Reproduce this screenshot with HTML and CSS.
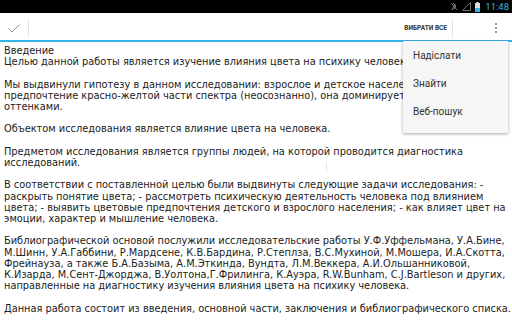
FILE: index.html
```html
<!DOCTYPE html>
<html lang="ru">
<head>
<meta charset="utf-8">
<title>Введение</title>
<link rel="stylesheet" href="styles.css">
</head>
<body>
<div class="status">
  <svg class="st-icon" width="8" height="9" viewBox="0 0 8 9"><path d="M2 8 L5 2 M3 1 L6 4 L4 7" stroke="#8a8a8a" stroke-width="1" fill="none"/><path d="M1 1 L7 8" stroke="#8a8a8a" stroke-width="0.8"/></svg>
  <svg class="st-icon" width="9" height="9" viewBox="0 0 9 9"><path d="M0.5 8.5 L8.5 0.5 L8.5 8.5 Z" stroke="#8a8a8a" stroke-width="0.8" fill="none"/></svg>
  <svg class="st-icon" width="5" height="10" viewBox="0 0 5 10"><rect x="1.5" y="0" width="2" height="1" fill="#fff"/><rect x="0" y="1" width="5" height="9" fill="#ddd"/><rect x="0" y="6" width="5" height="4" fill="#33b5e5"/></svg>
  <span class="time">11:48</span>
</div>
<div class="actionbar">
  <div class="done">
    <svg width="12" height="9" viewBox="0 0 12 9"><path d="M0.5 4.5 L4 8 L11.5 0.5" stroke="#8c8c8c" stroke-width="1" fill="none"/></svg>
  </div>
  <div class="divider"></div>
  <div class="spacer"></div>
  <div class="selectall">ВИБРАТИ ВСЕ</div>
  <div class="divider"></div>
  <div class="overflow"><span></span><span></span><span></span></div>
</div>
<div class="content">
  <p>Введение<br>Целью данной работы является изучение влияния цвета на психику человека.</p>
  <p>Мы выдвинули гипотезу в данном исследовании: взрослое и детское население отдает<br>предпочтение красно-желтой части спектра (неосознанно), она доминирует над холодными<br>оттенками.</p>
  <p>Объектом исследования является влияние цвета на человека.</p>
  <p>Предметом исследования является группы людей, на которой проводится диагностика<br>исследований.</p>
  <p>В соответствии с поставленной целью были выдвинуты следующие задачи исследования: -<br>раскрыть понятие цвета; - рассмотреть психическую деятельность человека под влиянием<br>цвета; - выявить цветовые предпочтения детского и взрослого населения; - как влияет цвет на<br>эмоции, характер и мышление человека.</p>
  <p>Библиографической основой послужили исследовательские работы У.Ф.Уффельмана, У.А.Бине,<br>М.Шинн, У.А.Габбини, Р.Мардсене, К.В.Бардина, Р.Степлза, В.С.Мухиной, М.Мошера, И.А.Скотта,<br>Фрейнауза, а также Б.А.Базыма, А.М.Эткинда, Вундта, Л.М.Веккера, А.И.Ольшанниковой,<br>К.Изарда, М.Сент-Джорджа, В.Уолтона,Г.Фрилинга, К.Ауэра, R.W.Bunham, C.J.Bartleson и других,<br>направленные на диагностику изучения влияния цвета на психику человека.</p>
  <p>Данная работа состоит из введения, основной части, заключения и библиографического списка.</p>
</div>
<div class="cursor"></div>
<div class="menu">
  <div class="item">Надіслати</div>
  <div class="item">Знайти</div>
  <div class="item">Веб-пошук</div>
</div>
</body>
</html>
```
FILE: styles.css
```css
html, body {
  margin: 0;
  padding: 0;
}
body {
  width: 512px;
  height: 320px;
  overflow: hidden;
  background: #fff;
  position: relative;
}
.status {
  height: 13px;
  background: #000;
  display: flex;
  justify-content: flex-end;
  align-items: center;
  gap: 4px;
  padding-right: 3px;
}
.st-icon {
  display: block;
}
.time {
  font-family: Roboto, sans-serif;
  font-size: 9.5px;
  color: #33b5e5;
  line-height: 13px;
  margin-left: 1px;
}
.actionbar {
  height: 27px;
  display: flex;
  align-items: center;
  border-bottom: 2px solid #33b5e5;
  background: #fff;
}
.done {
  width: 28px;
  display: flex;
  justify-content: center;
  padding-top: 3px;
}
.divider {
  width: 1px;
  height: 18px;
  background: #e2e2e2;
  margin-top: 3px;
}
.spacer {
  flex: 1;
}
.selectall {
  font-family: Roboto, sans-serif;
  font-weight: bold;
  font-size: 6.5px;
  color: #333;
  padding: 3px 5px 0 5px;
}
.overflow {
  width: 59px;
  display: flex;
  flex-direction: column;
  align-items: flex-end;
  gap: 2px;
  padding-right: 15px;
  box-sizing: border-box;
  padding-top: 3px;
}
.overflow span {
  width: 2px;
  height: 2px;
  background: #9a9a9a;
}
.content {
  padding: 3px 4px 0 4px;
  font-family: "DejaVu Sans Condensed", "DejaVu Sans", sans-serif;
  font-size: 10.9px;
  line-height: 11.2px;
  color: #222;
  white-space: nowrap;
}
.content p {
  margin: 0 0 11.2px 0;
}
.cursor {
  position: absolute;
  left: 326px;
  top: 162px;
  width: 1px;
  height: 10px;
  background: #e4e4e4;
}
.menu {
  position: absolute;
  left: 403px;
  top: 41px;
  width: 105px;
  height: 92px;
  background: #f6f6f6;
  box-shadow: 0 1px 3px rgba(0,0,0,0.35);
  box-sizing: border-box;
  padding-bottom: 8px;
}
.item {
  height: 28px;
  display: flex;
  align-items: center;
  padding-left: 10px;
  font-family: Roboto, sans-serif;
  font-size: 10px;
  color: #333;
}
```
